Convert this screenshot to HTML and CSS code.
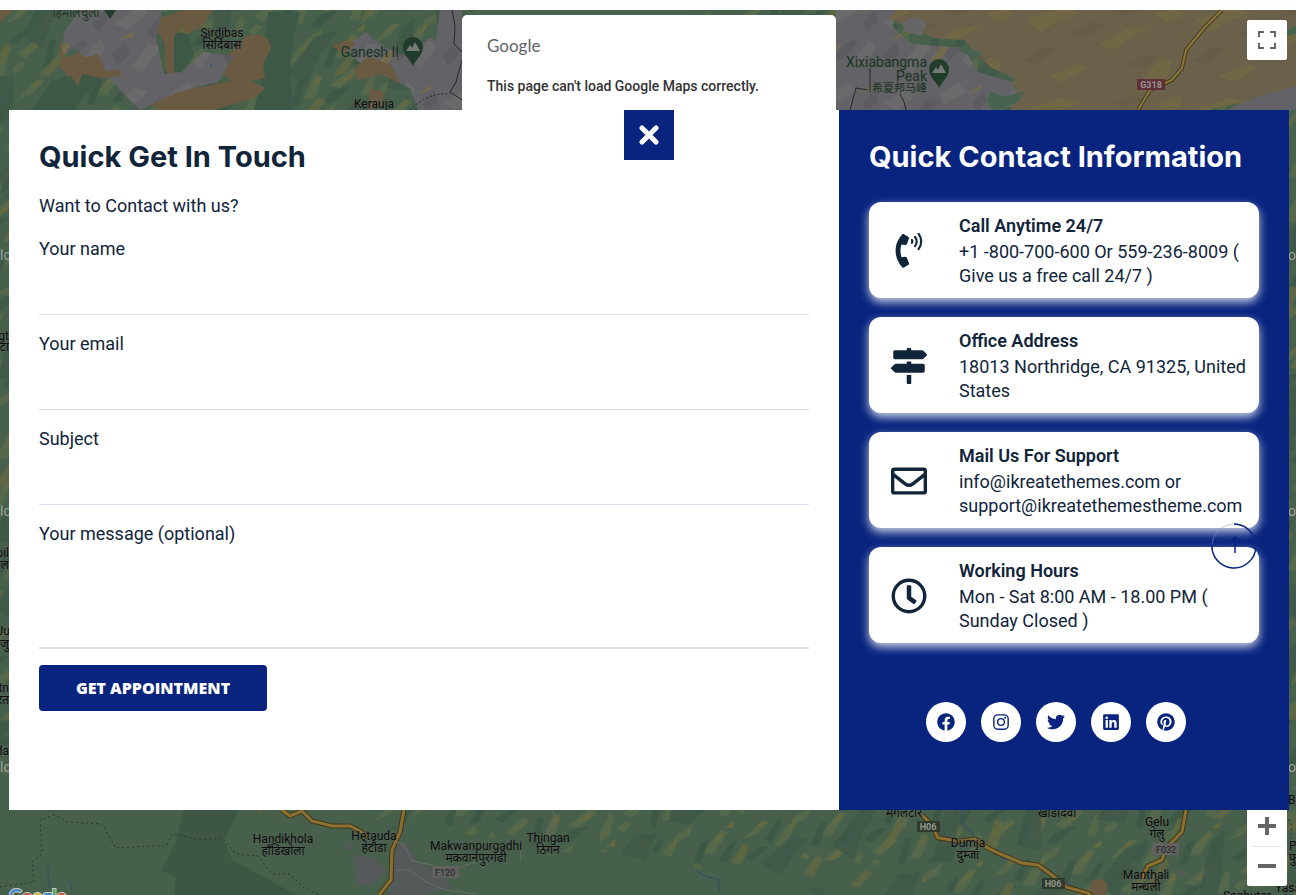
FILE: index.html
```html
<!DOCTYPE html>
<html lang="en">
<head>
<meta charset="utf-8">
<meta name="viewport" content="width=device-width, initial-scale=1">
<title>Quick Get In Touch</title>
<link rel="stylesheet" href="styles.css">
</head>
<body>
<main class="page">
  <svg class="map" viewBox="0 10 1296 885" preserveAspectRatio="xMidYMid slice" role="img" aria-label="Map">
    <defs>
      <pattern id="ridges" width="150" height="96" patternUnits="userSpaceOnUse" patternTransform="rotate(-9) scale(.8)">
        <path fill="#55694a" d="M2 30l28-20 10 2-18 14zM40 44l22-26 6 8-14 22zM70 12l24-10-6 12-20 8zM98 40l30-26 8 3-22 25zM10 70l26-14 8 5-24 16zM56 86l18-28 9 3-14 27zM90 74l34-18 4 8-26 15zM128 92l16-26 4 6-8 22zM0 88l12-8 8 4-14 10z"/>
        <path fill="#67693f" d="M20 20l10-9 5 3zM60 30l9-16 2 8zM110 33l16-15 6 2zM68 74l10-15 2 8zM104 72l17-10-2 8zM22 70l16-9 3 2zM134 12l12-8-3 9z"/>
        <path fill="#3e5847" d="M30 34l20-22 5 4-18 25zM86 50l14-24 12-4-16 30zM40 90l14-32 8 2-14 34zM118 52l18-20 10-2-16 24zM2 52l20-10 12 2-24 14zM76 94l18-14 24-2-28 18z"/>
      </pattern>
      <pattern id="folds" width="233" height="131" patternUnits="userSpaceOnUse" patternTransform="rotate(-21)">
        <path fill="#3f5847" fill-opacity=".8" d="M8 40l40-24 24 2-30 20-20 22zM96 90l34-50 18-6-14 30-20 34zM170 30l36-14 14 8-34 22-20 4zM30 110l30-20 22 6-26 26zM184 110l20-40 14 6-16 42z"/>
        <path fill="#636840" fill-opacity=".8" d="M50 60l30-20 4 5-20 16zM140 20l18-14 6 4-14 14zM150 96l20-22 6 4-16 24zM10 84l20-10 6 6-18 8zM204 56l20-14 2 8-14 12zM94 22l14-16 4 8z"/>
      </pattern>
      <pattern id="rock" width="110" height="80" patternUnits="userSpaceOnUse">
        <path fill="#6a6a6c" d="M4 24l22-16 12 4-20 18zM60 14l18-12 8 10-22 12zM22 66l16-22 14 2-20 26zM82 60l18-20 6 8-16 20z"/>
        <path fill="#5c5c60" d="M36 32l14-16 10 6-18 18zM64 52l20-14 4 6-20 18zM2 54l14-12 4 12-12 12zM92 24l12-14 4 10-10 12z"/>
        <path fill="#716b4b" d="M50 60l16-18 4 4-14 20zM10 40l12-8 2 4zM88 14l14-10-2 6z"/>
      </pattern>
      <pattern id="plateau" width="170" height="90" patternUnits="userSpaceOnUse">
        <path fill="#716745" d="M6 20l34-12 20 4-28 12-10 8zM80 44l30-16 22-2-26 14-12 10zM30 76l28-12 10 4-26 14zM122 82l18-24 12 4-8 22zM136 14l24-8 2 10-14 6z"/>
        <path fill="#665c48" d="M44 36l28-14 18 2-24 14zM104 66l20-12 16 4-18 10zM4 60l20-14 12 4-20 14zM92 12l18-6 14 3-18 7z"/>
      </pattern>
      <g id="peak">
        <path fill="#203c2a" d="M0 15C-3 8-10 4-10-4a10 10 0 0 1 20 0C10 4 3 8 0 15z"/>
        <path fill="#777b78" d="M-7 0l4-6 2 3 3-6 5 9z"/>
      </g>
    </defs>

    <rect y="10" width="1296" height="885" fill="#46604b"/>
    <rect y="10" width="1296" height="800" fill="url(#ridges)"/>
    <rect y="10" width="1296" height="800" fill="url(#folds)"/>
    <g fill="#3e5847">
      <path d="M30 110l26-28 22-14 20 8-24 34zM268 12h32l-10 40 2 58h-22l-8-32 4-40zM168 30l20 4 6 22-14 20-10-10zM262 82l30 4-2 24h-36z"/>
    </g>
    <path fill="#6b5a42" d="M0 10h14L0 22zM160 18l25-8h28l-10 16-15 8-6-6-8 8v40l-8-4-2-30-9-14zM246 36q22-6 25 12l-8 16 2 14-30 6-22-18 18-14zM60 38l6 20 32-14 8 28 12-4 4 8-22 2-6-12-20 4-6 8-8-16zM116 82l30 10 30-8 22 4 46-10 22 10-12 10-40 12h-54z"/>
    <g fill="#636367">
      <path d="M64 32l16-22h82l-6 28 8 36 18-2 22-20 30 4-16 26-40 10-38 18-20-20-16-18-30-24-12 8zM346 46l20-14 20 16 20 8 24-18 32 12v60h-44l-8-22-42-20-14-10zM440 10h22v100h-44l22-20-4-50zM836 10h62l-6 16 20 18 52 4 14 24 34 10 8 20-18 8H836zM1296 84l-30 10-32 12-6 4h68z"/>
    </g>
    <path fill="url(#rock)" d="M64 32l16-22h82l-6 28 8 36 18-2 22-20 30 4-16 26-40 10-38 18-20-20-16-18-30-24-12 8zM346 46l20-14 20 16 20 8 24-18 32 12v60h-44l-8-22-42-20-14-10zM836 10h62l-6 16 20 18 52 4 14 24 34 10 8 20-18 8H836z"/>
    <path fill="#6b5a42" d="M60 48l8 14 30-8 8 18 12-4 4 8-22 2-18-4-4 12-10-14-8-4zM332 46l14-6 10 4-12 10zM354 70l14-14 24 10 8 18-18-10-24 6zM370 88l14 4-2 14-14 4z"/>
    <path fill="#6b614b" d="M898 10h398v76l-30 8-22 8-38 8H1010l8-22-4-10-22-10-14-12-14-16-30-2-28-12-18-8z"/>
    <path fill="url(#plateau)" d="M898 10h398v76l-30 8-22 8-38 8H1010l8-22-4-10-22-10-14-12-14-16-30-2-28-12-18-8z"/>
    <path fill="#666668" d="M902 24q12-12 24 0l-4 12-16-4z"/>
    <g fill="#45634f"><path d="M964 46l18 7-4 6-18-8zM990 92l14 4 20-4-6 10-18 8h-8l-4-8zM1286 30l10-4v8l-10 2zM478 10h234l-12 5H478z"/></g>
    <path d="M1222 10l-18 18-18 22-4 18-10 12-22 10-12 20" fill="none" stroke="#41391f" stroke-width="4"/>
    <path d="M1222 10l-18 18-18 22-4 18-10 12-22 10-12 20" fill="none" stroke="#8f7938" stroke-width="2"/>
    <path d="M452 10l3 16-1 18 8 8M462 60l-6 22-6 10 12 8M850 110l6-22 12 2M870 68v24M900 94l4 8 2 8" fill="none" stroke="#24272a"/>
    <path d="M410 110q18-18 40-16" fill="none" stroke="#24272a" stroke-dasharray="2 2"/>

    <path fill="url(#ridges)" d="M424 810h872v85H960l-80-30-90-8-90 10-60-20-60 8-70-14-50-8zM360 810h64l-30 20z"/>
    <path fill="url(#folds)" d="M600 810h696v85H820l-60-30-80 4-80-20z"/>
    <path fill="#3e5745" d="M184 810h55l-15 30 8 20 34 18 30 17H174l2-18-14-6 14-30z"/>
    <g fill="#55595a"><path d="M394 842l14 2 10 20 20 6 14 18-30 7h-34l4-24zM350 854l24 4 14 14-18 12-14 2 2-18zM342 845l12-2-4 8zM1168 842l8-6v6zM1174 868l10 4-2 6z"/></g>
    <path fill="#6b5a42" d="M1092 880q16-4 16 10l-6 7h-12zM256 810h8l-4 3z"/>
    <g fill="none" stroke="#30352f" stroke-dasharray="2 3">
      <path d="M0 887l34-5-2-20 10-8-2-34 14-5 14 7 34 2 14 24 38-2h12l6-12 30 6 20-2 14 16 22 2 14 18 18 0 14 14 14 6"/>
      <path d="M1284 810l8 16-2 12 6 6M1285 895l11-14" />
    </g>
    <g fill="none" stroke="#34496a"><path d="M48 866v8l2 14M70 881l2 10M961 810l3 16 8 6 2 8 12 8 20 10 16 4 14 4 20 14 12 4 12 6M696 871l12 6 10 2 2 12M984 847l20 12 16 2 22 4"/></g>
    <g fill="none">
      <path stroke="#42371e" stroke-width="5" d="M282 810l8 6 12-5 10 10 20 5h18l10 5 8 6M404 810l-4 22-8 18-1 30-12 15M922 815l10 10 6 13 20 3 18-2 10 8 12 6 12 5 12 5 16 2 14 10 14 12 22 6 14 12M1186 810l-4 22-16 16-4 12-14 6-6 12"/>
      <path stroke="#8b7030" stroke-width="3" d="M282 810l8 6 12-5 10 10 20 5h18l10 5 8 6M404 810l-4 22-8 18-1 30-12 15M922 815l10 10 6 13 20 3 18-2 10 8 12 6 12 5 12 5 16 2 14 10 14 12 22 6 14 12M1186 810l-4 22-16 16-4 12-14 6-6 12"/>
    </g>
    <path fill="none" stroke="#6b6b6c" d="M396 841l8 4 8 16 20 4M396 870l14 0 16 12 20 8 30 4M552 810l4 8-8 10v8M476 862l-12 4-10 4M522 844l-2 16"/>
    <use href="#peak" x="413" y="51"/><use href="#peak" x="939" y="73"/>
    <path d="M104 10h12l-6 9z" fill="#203c2a"/>
    <circle cx="211" cy="65" r="1" fill="#345087"/>

    <g class="label">
      <text class="peak" x="76" y="17">हिमालचुली</text>
      <text x="222" y="37">Sirdibas</text><text x="222" y="49">सिर्दिबास</text>
      <text class="peak big" x="370" y="57">Ganesh II</text>
      <text x="374" y="108">Kerauja</text>
      <text class="peak end" x="927" y="67">Xixiabangma</text><text class="peak end" x="927" y="81">Peak</text><text class="peak end small" x="927" y="92">希夏邦马峰</text>
      <text x="283" y="843">Handikhola</text><text x="283" y="855">हाँडिखोला</text>
      <text x="374" y="840">Hetauda</text><text x="374" y="852">हेटौडा</text>
      <text x="476" y="850">Makwanpurgadhi</text><text x="476" y="862">मकवानपुरगढी</text>
      <text x="548" y="842">Thingan</text><text x="548" y="854">ठिगन</text>
      <text x="904" y="817">मंगलटार</text><text x="1057" y="817">खाँडादेवी</text>
      <text x="968" y="847">Dumja</text><text x="968" y="859">दुम्जा</text>
      <text x="1157" y="826">Gelu</text><text x="1157" y="838">गेलु</text>
      <text x="1146" y="879">Manthali</text><text x="1146" y="891">मन्थली</text>
      <text x="1247" y="900">Saghutar</text><text class="start" x="1275" y="892">Yasam</text>
      <text class="start" x="1289" y="850">Phu</text><text class="start" x="1289" y="862">फु</text><text class="start" x="1288" y="804">Bhoj</text>
      <text class="end" x="9" y="340">gt</text><text class="end" x="9" y="351">टा</text><text class="end" x="9" y="557">pil</text><text class="end" x="9" y="569">पिल</text>
      <text class="end" x="10" y="635">Ju</text><text class="end" x="9" y="648">जु</text><text class="end" x="9" y="692">tn</text><text class="end" x="9" y="704">रत</text><text class="end" x="9" y="755">da</text>
    </g>
    <g class="watermark">
      <text x="0" y="260">lo</text><text x="0" y="516">lo</text><text x="0" y="772">lo</text>
      <text x="1288" y="260">op</text><text x="1288" y="516">op</text><text x="1288" y="772">op</text>
    </g>
    <g class="shield">
      <rect x="1137" y="79" width="28" height="11" fill="#622e38"/><text x="1151" y="88">G318</text>
      <rect x="432" y="866" width="27" height="12" fill="#606160"/><text class="dark" x="445" y="876">F120</text>
      <rect x="917" y="821" width="23" height="11" fill="#303b2b"/><text x="928" y="830">H06</text>
      <rect x="1042" y="878" width="23" height="11" fill="#303b2b"/><text x="1053" y="887">H06</text>
      <rect x="1152" y="843" width="27" height="12" fill="#606160"/><text class="dark" x="1166" y="853">F032</text>
    </g>
    <text class="brand" x="9" y="903"><tspan fill="#4285c8">G</tspan><tspan fill="#d9483b">o</tspan><tspan fill="#e8b233">o</tspan><tspan fill="#4285c8">g</tspan><tspan fill="#48a45c">l</tspan><tspan fill="#d9483b">e</tspan></text>
  </svg>

  <button class="map-button fullscreen" type="button" aria-label="Toggle fullscreen view">
    <svg width="18" height="18" viewBox="0 0 18 18"><path fill="#666" d="M0 0v6h2V2h4V0zM18 0h-6v2h4v4h2zM16 16h-4v2h6v-6h-2zM2 12H0v6h6v-2H2z"/></svg>
  </button>
  <div class="map-button zoom">
    <button type="button" aria-label="Zoom in"><svg width="18" height="18" viewBox="0 0 18 18"><path fill="#666" d="M7 0h4v7h7v4h-7v7H7v-7H0V7h7z"/></svg></button>
    <button type="button" aria-label="Zoom out"><svg width="18" height="18" viewBox="0 0 18 18"><path fill="#666" d="M0 7h18v4H0z"/></svg></button>
  </div>

  <div class="map-notice">
    <div class="notice-logo">Google</div>
    <p class="notice-text">This page can't load Google Maps correctly.</p>
  </div>

  <div class="overlay">
    <div class="modal">
      <section class="form-panel">
        <h2 class="title">Quick Get In Touch</h2>
        <p class="intro">Want to Contact with us?</p>
        <form class="form">
          <div class="field"><label for="name">Your name</label><input id="name" type="text"></div>
          <div class="field"><label for="email">Your email</label><input id="email" type="email"></div>
          <div class="field"><label for="subject">Subject</label><input id="subject" type="text"></div>
          <div class="field"><label for="message">Your message (optional)</label><textarea id="message"></textarea></div>
          <button class="submit" type="submit">GET APPOINTMENT</button>
        </form>
      </section>
      <section class="info-panel">
        <h2 class="title">Quick Contact Information</h2>
        <div class="cards">
          <article class="card">
            <svg class="card-icon" viewBox="-66 18 512 512"><path fill="currentColor" d="M97 507c-130-130-130-340 0-470 6-6 15-7 21-2l65 40a17 17 0 0 1 7 21l-32 81a17 17 0 0 1-18 11l-56-6c-21 58-21 122 0 180l56-6a17 17 0 0 1 18 11l32 81a17 17 0 0 1-7 21l-65 40a17 17 0 0 1-21-2z"/><g fill="none" stroke="currentColor" stroke-width="30" stroke-linecap="round"><path d="M232 118q11 20 0 40M276 72q46 66 0 132M326 28q76 110 0 220"/></g></svg>
            <div><h3>Call Anytime 24/7</h3><p>+1 -800-700-600 Or 559-236-8009 ( Give us a free call 24/7 )</p></div>
          </article>
          <article class="card">
            <svg class="card-icon" viewBox="0 0 512 512"><path fill="currentColor" d="M507.31 84.69L464 41.37c-6-6-14.14-9.37-22.63-9.37H288V16c0-8.84-7.16-16-16-16h-32c-8.84 0-16 7.16-16 16v16H56c-13.25 0-24 10.75-24 24v80c0 13.25 10.75 24 24 24h385.37c8.49 0 16.62-3.37 22.63-9.37l43.31-43.31c6.25-6.26 6.25-16.38 0-22.63zM224 496c0 8.84 7.16 16 16 16h32c8.84 0 16-7.16 16-16V384h-64v112zm232-272H288v-32h-64v32H70.63c-8.49 0-16.62 3.37-22.63 9.37L4.69 276.69c-6.25 6.25-6.25 16.38 0 22.63L48 342.63c6 6 14.14 9.37 22.63 9.37H456c13.25 0 24-10.75 24-24v-80c0-13.25-10.75-24-24-24z"/></svg>
            <div><h3>Office Address</h3><p>18013 Northridge, CA 91325, United States</p></div>
          </article>
          <article class="card">
            <svg class="card-icon" viewBox="0 0 512 512"><g fill="none" stroke="currentColor" stroke-width="48"><rect x="24" y="88" width="464" height="336" rx="24"/><path d="M24 158l178 139q54 42 108 0l178-139"/></g></svg>
            <div><h3>Mail Us For Support</h3><p>info@ikreatethemes.com or support@ikreatethemestheme.com</p></div>
          </article>
          <article class="card">
            <svg class="card-icon" viewBox="0 0 512 512"><circle cx="256" cy="256" r="224" fill="none" stroke="currentColor" stroke-width="48"/><path fill="currentColor" d="M224 116q0-12 12-12h40q12 0 12 12v149l70 52q10 7 3 17l-24 32q-7 10-17 3l-87-64q-9-7-9-20z"/></svg>
            <div><h3>Working Hours</h3><p>Mon - Sat 8:00 AM - 18.00 PM ( Sunday Closed )</p></div>
          </article>
        </div>
        <nav class="social" aria-label="Social links">
          <a href="#facebook" aria-label="Facebook"><svg viewBox="0 0 512 512"><path d="M504 256C504 119 393 8 256 8S8 119 8 256c0 123.78 90.69 226.38 209.25 245V327.69h-63V256h63v-54.64c0-62.15 37-96.48 93.67-96.48 27.14 0 55.52 4.84 55.52 4.84v61h-31.28c-30.8 0-40.41 19.12-40.41 38.73V256h68.78l-11 71.69h-57.78V501C413.31 482.38 504 379.78 504 256z"/></svg></a>
          <a href="#instagram" aria-label="Instagram"><svg viewBox="0 0 512 512"><g fill="none" stroke="currentColor" stroke-width="40"><rect x="52" y="52" width="408" height="408" rx="112"/><circle cx="256" cy="256" r="95"/></g><circle cx="376" cy="136" r="27"/></svg></a>
          <a href="#twitter" aria-label="Twitter"><svg viewBox="0 0 512 512"><path d="M459.37 151.716c.325 4.548.325 9.097.325 13.645 0 138.72-105.583 298.558-298.558 298.558-59.452 0-114.68-17.219-161.137-47.106 8.447.974 16.568 1.299 25.34 1.299 49.055 0 94.213-16.568 130.274-44.832-46.132-.975-84.792-31.188-98.112-72.772 6.498.974 12.995 1.624 19.818 1.624 9.421 0 18.843-1.3 27.614-3.573-48.081-9.747-84.143-51.98-84.143-102.985v-1.299c13.969 7.797 30.214 12.67 47.431 13.319-28.264-18.843-46.781-51.005-46.781-87.391 0-19.492 5.197-37.36 14.294-52.954 51.655 63.675 129.3 105.258 216.365 109.807-1.624-7.797-2.599-15.918-2.599-24.04 0-57.828 46.782-104.934 104.934-104.934 30.213 0 57.502 12.67 76.67 33.137 23.715-4.548 46.456-13.32 66.599-25.34-7.798 24.366-24.366 44.833-46.132 57.827 21.117-2.273 41.584-8.122 60.426-16.243-14.292 20.791-32.161 39.308-52.628 54.253z"/></svg></a>
          <a href="#linkedin" aria-label="LinkedIn"><svg viewBox="-32 0 512 512"><path d="M416 32H31.9C14.3 32 0 46.5 0 64.3v383.4C0 465.5 14.3 480 31.9 480H416c17.6 0 32-14.5 32-32.3V64.3c0-17.8-14.4-32.3-32-32.3zM135.4 416H69V202.2h66.5V416zm-33.2-243c-21.3 0-38.5-17.3-38.5-38.5S80.9 96 102.2 96c21.2 0 38.5 17.3 38.5 38.5 0 21.3-17.2 38.5-38.5 38.5zm282.1 243h-66.4V312c0-24.8-.5-56.7-34.5-56.7-34.6 0-39.9 27-39.9 54.9V416h-66.4V202.2h63.7v29.2h.9c8.9-16.8 30.6-34.5 62.9-34.5 67.2 0 79.7 44.3 79.7 101.9V416z"/></svg></a>
          <a href="#pinterest" aria-label="Pinterest"><svg viewBox="-8 0 512 512"><path d="M496 256c0 137-111 248-248 248-25.6 0-50.2-3.9-73.4-11.1 10.1-16.5 25.2-43.5 30.8-65 3-11.6 15.4-59 15.4-59 8.1 15.4 31.7 28.5 56.8 28.5 74.8 0 128.7-68.8 128.7-154.3 0-81.9-66.9-143.2-152.9-143.2-107 0-163.9 71.8-163.9 150.1 0 36.4 19.4 81.7 50.3 96.1 4.7 2.2 7.2 1.2 8.3-3.3.8-3.4 5-20.3 6.9-28.1.6-2.5.3-4.7-1.7-7.1-10.1-12.5-18.3-35.3-18.3-56.6 0-54.7 41.4-107.6 112-107.6 60.9 0 103.6 41.5 103.6 100.9 0 67.1-33.9 113.6-78 113.6-24.3 0-42.6-20.1-36.7-44.8 7-29.5 20.5-61.3 20.5-82.6 0-19-10.2-34.9-31.4-34.9-24.9 0-44.9 25.7-44.9 60.2 0 22 7.4 36.8 7.4 36.8s-24.5 103.8-29 123.2c-5 21.4-3 51.6-.9 71.2C65.4 450.9 0 361.1 0 256 0 119 111 8 248 8s248 111 248 248z"/></svg></a>
        </nav>
      </section>
      <button class="close" type="button" aria-label="Close"><svg width="20" height="20" viewBox="0 0 20 20"><path d="M3 3l14 14M17 3L3 17" stroke="#fff" stroke-width="5" stroke-linecap="round"/></svg></button>
    </div>
  </div>
  <a class="to-top" href="#top" aria-label="Back to top">
    <svg width="46" height="46" viewBox="0 0 46 46" fill="none"><circle cx="23" cy="23" r="22" stroke="#9099be" stroke-opacity=".5"/><path d="M23 1A22 22 0 1 1 1 21" stroke="#08247f" stroke-width="1.5"/><path d="M24 30V14M19 19l5-5 5 5" stroke="#08247f" stroke-width="1.5"/></svg>
  </a>
</main>
</body>
</html>
```
FILE: styles.css
```css
* { box-sizing: border-box; }

body {
  margin: 0;
  background: #fdfdfd;
  color: #10243a;
  font-family: Roboto, "Noto Sans", sans-serif;
  font-size: 18px;
  line-height: 26px;
}

h2, h3, p { margin: 0; }
button { border: 0; font: inherit; cursor: pointer; }

.page {
  position: relative;
  height: calc(100vh - 10px);
  min-height: 740px;
  margin-top: 10px;
  overflow: hidden;
}

.map { display: block; width: 100%; height: 100%; }
.map text { font-family: Roboto, "Noto Sans", "Noto Sans CJK SC", sans-serif; }
.label text { font-size: 12px; text-anchor: middle; fill: #0c0d0c; paint-order: stroke; stroke: #5b605c; stroke-opacity: .4; stroke-width: 2px; }
.label .peak { fill: #1c3425; }
.label .big, .label .peak.end { font-size: 14px; }
.label .peak.small { font-size: 11px; }
.label .end { text-anchor: end; }
.label .start { text-anchor: start; }
.watermark text { font-size: 14px; fill: #9aa39c; }
.shield text { font-size: 9px; font-weight: 700; text-anchor: middle; fill: #92958e; }
.shield .dark { fill: #202320; font-weight: 400; }
.map .brand { font-family: Lato, sans-serif; font-size: 18px; font-weight: 700; paint-order: stroke; stroke: #c9cfca; stroke-width: 2px; }

.map-button {
  position: absolute;
  right: 9px;
  width: 40px;
  padding: 0;
  background: #fff;
  border-radius: 2px;
}
.map-button svg { display: block; margin: auto; }
.fullscreen { top: 10px; height: 40px; }
.zoom { bottom: 9px; display: flex; flex-direction: column; }
.zoom button { height: 40px; padding: 0; background: none; }
.zoom button + button { position: relative; }
.zoom button + button::before { content: ""; position: absolute; top: 0; left: 5px; right: 5px; height: 1px; background: #e3e3e3; }

.map-notice {
  position: absolute;
  top: 5px;
  left: 50%;
  width: 374px;
  height: 160px;
  margin-left: -186px;
  padding: 17px 25px;
  background: #fff;
  border-radius: 5px;
}
.notice-logo { color: #606367; font-family: Lato, sans-serif; font-size: 17px; line-height: 28px; }
.notice-text { margin-top: 15px; color: #333; font-size: 14px; font-weight: 500; line-height: 22px; }

.overlay {
  position: absolute;
  inset: 0;
  display: flex;
  padding: 100px 7px 85px 9px;
}
.modal { position: relative; display: flex; flex: 1; background: #fff; }
.form-panel { flex: 1; padding: 30px; }
.info-panel { width: 450px; padding: 30px; background: #08247f; }

.title { font-family: Inter, "Open Sans", sans-serif; font-size: 29px; font-weight: 700; line-height: 34px; white-space: nowrap; }
.info-panel .title { color: #fff; }
.intro { margin: 19px 0 17px; }

.form { display: flex; flex-direction: column; gap: 16px; }
.field { display: flex; flex-direction: column; }
.field input, .field textarea {
  width: 100%;
  height: 53px;
  padding: 8px 0;
  border: 0;
  border-bottom: 1px solid #dcdcec;
  background: #fff;
  color: inherit;
  font: inherit;
  outline: 0;
}
.field textarea { display: block; height: 102px; border-bottom: 2px solid #dedede; resize: none; }
.submit {
  align-self: flex-start;
  width: 228px;
  height: 46px;
  border-radius: 4px;
  background: #08247f;
  color: #fff;
  font-family: "Open Sans", sans-serif;
  font-size: 16px;
  font-weight: 800;
}

.cards { display: flex; flex-direction: column; gap: 19px; margin-top: 28px; }
.card {
  display: flex;
  align-items: center;
  gap: 32px;
  padding: 12px 10px 10px 22px;
  border-radius: 12px;
  background: #fff;
  box-shadow: 0 4px 10px rgba(255, 255, 255, .8);
  line-height: 24px;
}
.card-icon { flex: none; width: 36px; height: 36px; }
.card h3 { margin-bottom: 2px; font-size: 18px; font-weight: 600; line-height: 24px; }

.social { display: flex; justify-content: center; gap: 15px; margin-top: 59px; padding-right: 16px; }
.social a { display: flex; align-items: center; justify-content: center; width: 40px; height: 40px; border-radius: 50%; background: #fff; color: #08247f; }
.social svg { width: 18px; height: 18px; fill: currentColor; }

.close {
  position: absolute;
  top: 0;
  left: 50%;
  display: flex;
  align-items: center;
  justify-content: center;
  width: 50px;
  height: 50px;
  margin-left: -25px;
  padding: 0;
  background: #08247f;
}

.to-top { position: absolute; right: 39px; bottom: 326px; display: block; width: 46px; height: 46px; }
.to-top svg { display: block; }
```
